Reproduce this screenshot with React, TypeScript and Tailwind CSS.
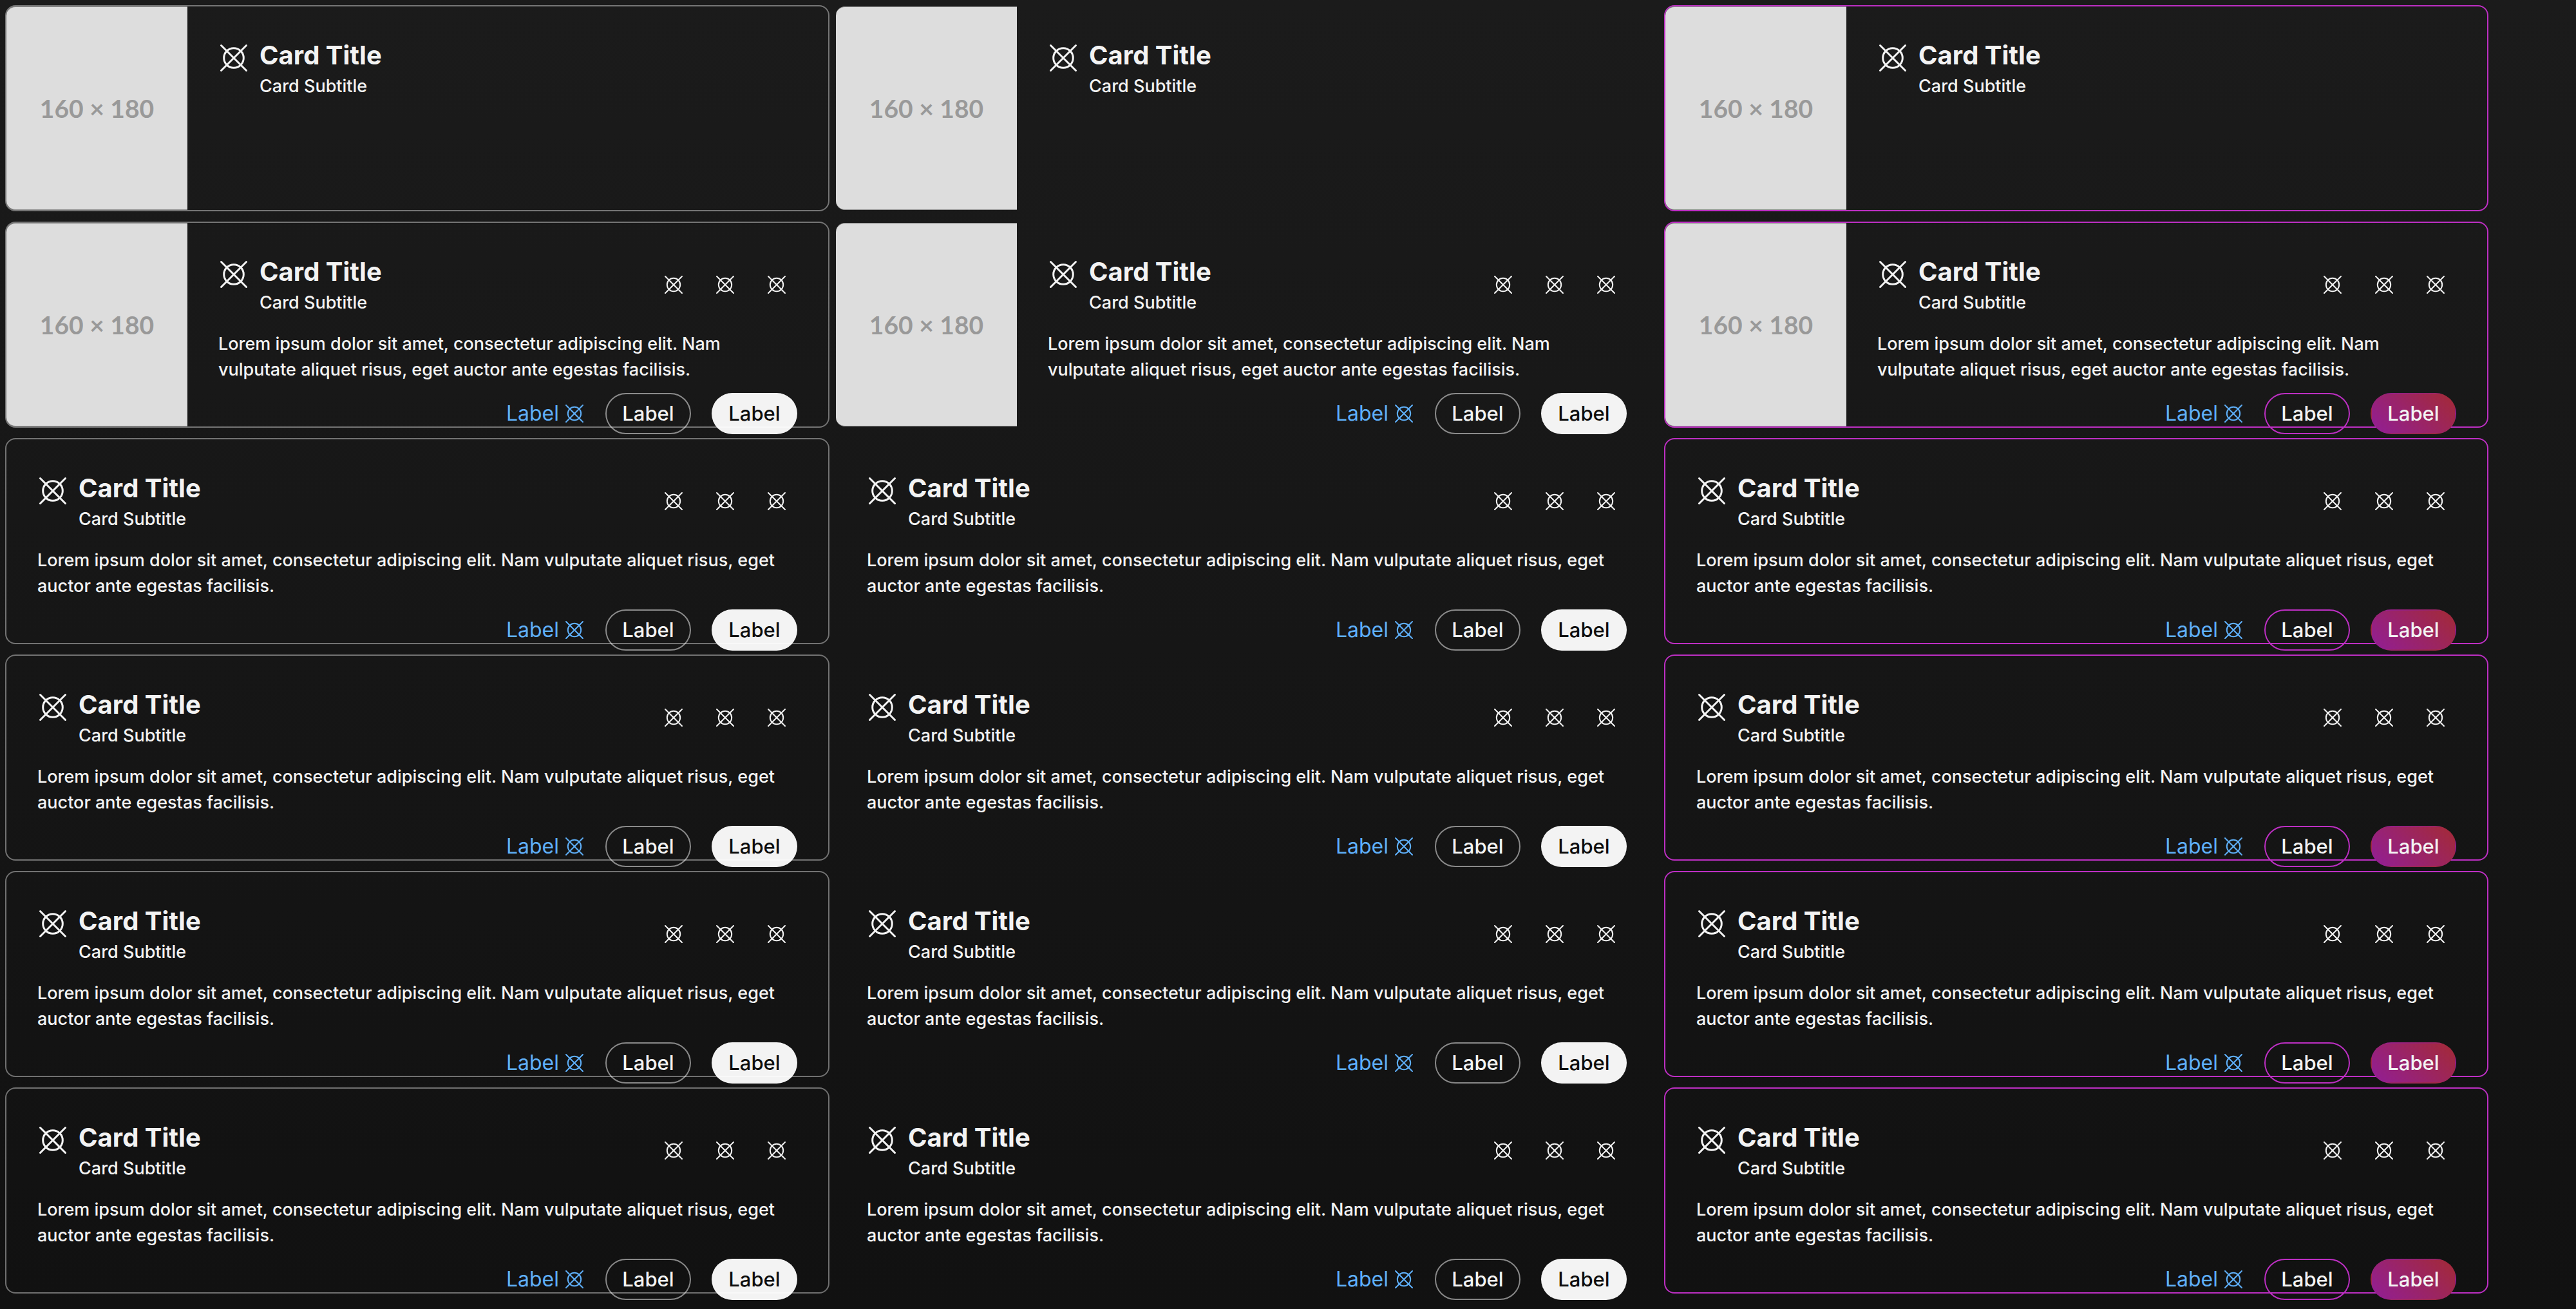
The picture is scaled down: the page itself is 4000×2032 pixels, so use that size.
type Variant = "outline" | "plain" | "brand";

function Glyph({ className }: { className: string }) {
  return (
    <svg
      className={className}
      viewBox="0 0 16 16"
      fill="none"
      stroke="currentColor"
      strokeLinecap="round"
      aria-hidden="true"
    >
      <circle cx="8" cy="8" r="5.1" />
      <path d="M1.5 1.5 14.5 14.5M14.5 1.5 1.5 14.5" />
    </svg>
  );
}

const CARD_BORDER: Record<Variant, string> = {
  outline: "border-transparent",
  plain: "border-transparent",
  brand: "border-[#be2fc4]",
};

const SECONDARY: Record<Variant, string> = {
  outline: "border-white/50",
  plain: "border-white/50",
  brand: "border-[#be2fc4]",
};

const PRIMARY: Record<Variant, string> = {
  outline: "bg-[#f3f3f3] text-[#0d0d0d]",
  plain: "bg-[#f3f3f3] text-[#0d0d0d]",
  brand: "bg-[linear-gradient(45deg,#921e96,#a32a36)] text-[#f3f3f3]",
};

function Card({ variant, image, full }: { variant: Variant; image: boolean; full: boolean }) {
  return (
    <article className={`relative flex h-80 rounded-2xl border-2 ${CARD_BORDER[variant]}`}>
      {image && (
        <div
          role="img"
          aria-label="160 × 180"
          className="flex w-[281px] shrink-0 items-center justify-center rounded-l-[14px] border-y border-[#8a8a8a] bg-[#dddddd] font-['Lato',sans-serif] text-[39px] font-bold text-[#999999]"
        >
          160 × 180
        </div>
      )}
      <div className="flex min-w-0 flex-1 flex-col p-12">
        <header className="flex shrink-0 items-center gap-4">
          <Glyph className="mt-2 size-12 self-start" />
          <div className="min-w-0 flex-1">
            <h2 className="text-[40px] leading-14 font-bold">Card Title</h2>
            <p className="text-[27px] leading-10 font-medium">Card Subtitle</p>
          </div>
          {full && (
            <div className="flex gap-4">
              {["First action", "Second action", "Third action"].map((name) => (
                <button key={name} type="button" aria-label={name} className="flex size-16 items-center justify-center">
                  <Glyph className="size-8" />
                </button>
              ))}
            </div>
          )}
        </header>
        {full && (
          <>
            <p className="mt-6 shrink-0 text-[27px] leading-10 font-medium">
              Lorem ipsum dolor sit amet, consectetur adipiscing elit. Nam vulputate aliquet risus, eget auctor ante
              egestas facilisis.
            </p>
            <footer className="mt-4 flex shrink-0 items-center justify-end gap-8 text-[32px] leading-10">
              <a href="#" className="flex items-center gap-2 text-[#5fb0fa]">
                Label
                <Glyph className="size-8" />
              </a>
              <button
                type="button"
                className={`h-16 w-[133px] rounded-full border-2 text-[31px] font-medium ${SECONDARY[variant]}`}
              >
                Label
              </button>
              <button
                type="button"
                className={`h-16 w-[133px] rounded-full border-2 border-transparent text-[31px] font-medium ${PRIMARY[variant]}`}
              >
                Label
              </button>
            </footer>
          </>
        )}
      </div>
      {variant === "outline" && (
        <div className="pointer-events-none absolute -inset-0.5 rounded-2xl border-2 border-white/40" />
      )}
    </article>
  );
}

const ROWS = [
  { image: true, full: false },
  { image: true, full: true },
  { image: false, full: true },
  { image: false, full: true },
  { image: false, full: true },
  { image: false, full: true },
];

const VARIANTS: Variant[] = ["outline", "plain", "brand"];

export default function App() {
  return (
    <main className="min-h-screen bg-linear-to-b from-[#1b1b1b] to-[#111111] p-2 font-['Inter',sans-serif] text-[#f3f3f3]">
      <div className="mr-32 grid grid-cols-3 gap-x-2 gap-y-4">
        {ROWS.map((row, i) =>
          VARIANTS.map((variant) => <Card key={`${variant}-${i}`} variant={variant} {...row} />),
        )}
      </div>
    </main>
  );
}
